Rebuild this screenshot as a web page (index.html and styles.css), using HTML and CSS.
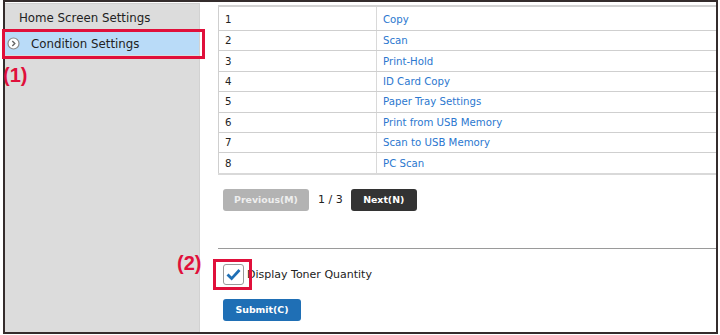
FILE: index.html
```html
<!DOCTYPE html>
<html lang="en">
<head>
	<meta charset="utf-8">
	<title>Condition Settings</title>
	<link rel="stylesheet" href="styles.css">
</head>
<body>

	<div class="frame">
		<div class="sidebar">
			<div class="menu-item">Home Screen Settings</div>
			<div class="menu-item active">
				<svg class="arrow" width="13" height="13" viewBox="0 0 13 13">
					<circle cx="6.5" cy="6.5" r="5.5" fill="#fff" stroke="#8a8a8a" stroke-width="1.2"/>
					<path d="M5.3 4 L7.8 6.5 L5.3 9" fill="none" stroke="#666" stroke-width="1.4"/>
				</svg>
				Condition Settings
			</div>
		</div>

		<div class="main">
			<table class="list">
				<tr><td class="num">1</td><td><a href="#">Copy</a></td></tr>
				<tr><td class="num">2</td><td><a href="#">Scan</a></td></tr>
				<tr><td class="num">3</td><td><a href="#">Print-Hold</a></td></tr>
				<tr><td class="num">4</td><td><a href="#">ID Card Copy</a></td></tr>
				<tr><td class="num">5</td><td><a href="#">Paper Tray Settings</a></td></tr>
				<tr><td class="num">6</td><td><a href="#">Print from USB Memory</a></td></tr>
				<tr><td class="num">7</td><td><a href="#">Scan to USB Memory</a></td></tr>
				<tr><td class="num">8</td><td><a href="#">PC Scan</a></td></tr>
			</table>

			<div class="pager">
				<button type="button" class="btn btn-off">Previous(M)</button>
				<span class="page-no">1 / 3</span>
				<button type="button" class="btn btn-dark">Next(N)</button>
			</div>

			<div class="divider"></div>

			<div class="check-row">
				<span class="checkbox">
					<svg width="15" height="13" viewBox="0 0 15 13">
						<path d="M1.5 6.5 L5.6 10.6 L13.5 2" fill="none" stroke="#1f6fb5" stroke-width="2.8"/>
					</svg>
				</span>
				<span class="check-label">Display Toner Quantity</span>
			</div>

			<button type="button" class="btn btn-blue">Submit(C)</button>
		</div>
	</div>

	<!-- callouts drawn over the screenshot -->
	<div class="callout box-one"></div>
	<div class="callout-num num-one">(1)</div>
	<div class="callout box-two"></div>
	<div class="callout-num num-two">(2)</div>

</body>
</html>
```

FILE: styles.css
```css
body {
	margin: 0;
	background-color: #fff;
	font-family: "DejaVu Sans", Verdana, sans-serif;
	color: #222;
	position: relative;
	width: 720px;
	height: 335px;
	overflow: hidden;
}

.frame {
	margin-left: 3px;
	width: 711px;
	height: 330px;
	border: 2px solid #342c2c;
	display: flex;
}

.sidebar {
	width: 195px;
	margin-top: 1px;
	background-color: #dcdcdc;
	border-top: 1px solid #cfcfcf;
	border-right: 1px solid #d2d2d2;
	box-sizing: border-box;
}

.menu-item {
	height: 24px;
	display: flex;
	align-items: center;
	padding-left: 14px;
	font-size: 11.8px;
	color: #222;
	margin-top: 2px;
}

.menu-item.active {
	height: 23px;
	background-color: #b9dbf8;
	padding-left: 2px;
	margin-top: 2px;
}

.arrow {
	margin-right: 11px;
}

.main {
	flex: 1;
	padding: 3px 0 0 18px;
	overflow: hidden;
}

.list {
	width: 502px;
	border-collapse: collapse;
	border-top: 2px solid #d2d2d2;
	border-bottom: 2px solid #d9d9d9;
	border-left: 1px solid #cfcfcf;
	font-size: 10.2px;
}

.list td {
	height: 19.4px;
	padding: 0 0 0 6px;
	border-bottom: 1px solid #cfcfcf;
	vertical-align: middle;
}

.list tr:first-child td {
	height: 21px;
	padding-top: 2px;
}

.list tr:last-child td {
	border-bottom: none;
}

.list td.num {
	width: 151px;
	border-right: 1px solid #d9d9d9;
	color: #222;
}

.list a {
	color: #2b78cf;
	text-decoration: none;
}

.pager {
	display: flex;
	align-items: center;
	margin: 14px 0 0 5px;
}

.page-no {
	font-size: 11px;
	margin: 0 8px 0 9px;
}

.btn {
	height: 22px;
	border: none;
	border-radius: 3px;
	font-family: "DejaVu Sans", Verdana, sans-serif;
	font-size: 9.4px;
	font-weight: bold;
	padding: 0;
	text-align: center;
}

.btn-off {
	width: 86px;
	background-color: #b3b3b3;
	color: #eeeeee;
}

.btn-dark {
	width: 66px;
	background-color: #333;
	color: #fff;
}

.btn-blue {
	width: 78px;
	margin: 14px 0 0 5px;
	background-color: #1f6fb5;
	color: #fff;
	display: block;
}

.divider {
	margin-top: 37px;
	border-top: 1px solid #9a9a9a;
}

.check-row {
	display: flex;
	align-items: center;
	margin: 15px 0 0 5px;
}

.checkbox {
	width: 19px;
	height: 19px;
	border: 1px solid #9a9a9a;
	border-radius: 3px;
	background-color: #fff;
	display: flex;
	align-items: center;
	justify-content: center;
}

.check-label {
	font-size: 11px;
	margin-left: 3px;
}

.callout {
	position: absolute;
	border: 3px solid #e0103b;
	box-sizing: border-box;
}

.box-one {
	left: 2px;
	top: 29px;
	width: 203px;
	height: 30px;
}

.box-two {
	left: 213px;
	top: 259px;
	width: 39px;
	height: 31px;
}

.callout-num {
	position: absolute;
	font-family: "Liberation Sans", Arial, sans-serif;
	font-weight: bold;
	font-size: 20px;
	color: #e0103b;
}

.num-one {
	left: 3px;
	top: 64px;
}

.num-two {
	left: 177px;
	top: 252px;
}
```
